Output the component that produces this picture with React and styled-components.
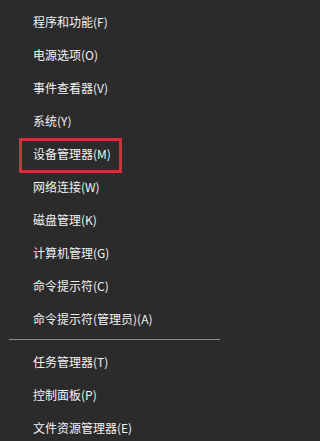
import React from 'react';
import styled, { createGlobalStyle } from 'styled-components';

const GlobalStyle = createGlobalStyle`
  html, body {
    margin: 0;
    padding: 0;
    background: #2b2b2b;
  }
  body {
    font-family: "Noto Sans CJK SC", "Noto Sans", sans-serif;
  }
`;

const Menu = styled.div`
  width: 229px;
  height: 441px;
  background: #2b2b2b;
  padding-top: 5px;
  box-sizing: border-box;
  overflow: hidden;
`;

const Item = styled.div`
  position: relative;
  height: 33px;
  display: flex;
  align-items: center;
  padding-left: 33px;
  color: #f2f2f2;
  font-size: 12px;
  white-space: nowrap;

  ${props => props.$marked && `
    &::after {
      content: '';
      position: absolute;
      left: 19px;
      top: 1px;
      width: 103px;
      height: 35px;
      box-sizing: border-box;
      border: 3px solid #c8363a;
    }
  `}
`;

const Divider = styled.div`
  height: 1px;
  margin: 4px 9px 5px;
  background: #8c8c8c;
`;

const topItems = [
  '程序和功能(F)',
  '电源选项(O)',
  '事件查看器(V)',
  '系统(Y)',
  '设备管理器(M)',
  '网络连接(W)',
  '磁盘管理(K)',
  '计算机管理(G)',
  '命令提示符(C)',
  '命令提示符(管理员)(A)',
];

const bottomItems = ['任务管理器(T)', '控制面板(P)', '文件资源管理器(E)'];

export default function App() {
  return (
    <>
      <GlobalStyle />
      <Menu>
        {topItems.map(label => (
          <Item key={label} $marked={label === '设备管理器(M)'}>{label}</Item>
        ))}
        <Divider />
        {bottomItems.map(label => (
          <Item key={label}>{label}</Item>
        ))}
      </Menu>
    </>
  );
}
